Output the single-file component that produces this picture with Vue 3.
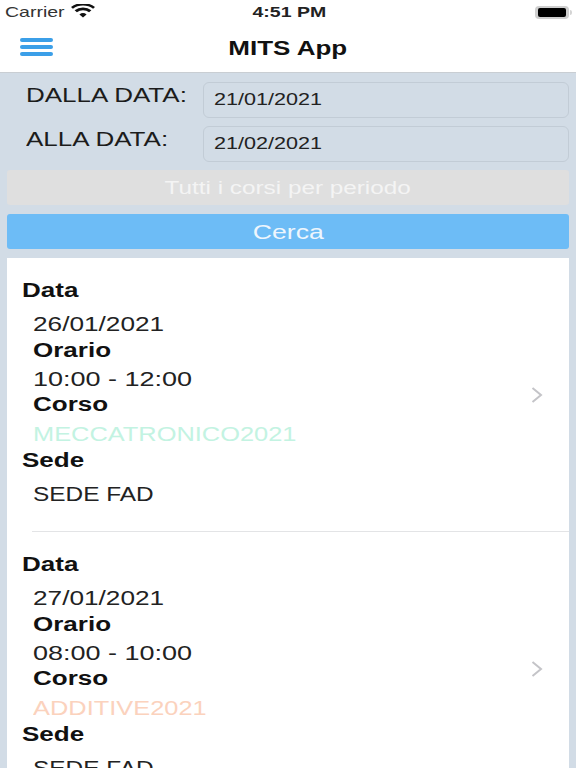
<template>
  <div class="screen">
    <div class="status">
      <div class="carrier">
        <span class="wide">Carrier</span>
        <svg class="wifi" viewBox="0 0 24 17" width="24" height="14" preserveAspectRatio="none">
          <path d="M12 16.5 8.4 12.6a5.2 5.2 0 0 1 7.2 0zM5.900 10.100 3.600 7.600a12.300 12.300 0 0 1 16.800 0l-2.300 2.500a9 9 0 0 0-12.200 0zM1.900 5.800 0 3.600a17.600 17.600 0 0 1 24 0l-1.900 2.200a14.800 14.800 0 0 0-20.200 0z" fill="#111" />
        </svg>
      </div>
      <span class="clock wide-c">4:51 PM</span>
      <div class="battery"><i /></div>
    </div>

    <header class="nav">
      <button class="burger" aria-label="Menu"><i /><i /><i /></button>
      <h1 class="wide-c">MITS App</h1>
    </header>

    <section class="filters">
      <div v-for="f in filters" :key="f.label" class="field">
        <label><span class="wide">{{ f.label }}</span></label>
        <div class="input"><span class="wide">{{ f.value }}</span></div>
      </div>
    </section>

    <button class="btn btn-grey"><span class="wide-c">Tutti i corsi per periodo</span></button>
    <button class="btn btn-blue"><span class="wide-c">Cerca</span></button>

    <main class="list">
      <article v-for="l in lessons" :key="l.date" class="lesson">
        <div class="info">
          <h3><span class="wide">Data</span></h3>
          <p class="date"><span class="wide">{{ l.date }}</span></p>
          <h4><span class="wide">Orario</span></h4>
          <p class="time"><span class="wide">{{ l.time }}</span></p>
          <h4><span class="wide">Corso</span></h4>
          <p class="course" :style="{ color: l.color }"><span class="wide">{{ l.course }}</span></p>
          <h3 class="sede"><span class="wide">Sede</span></h3>
          <p class="place"><span class="wide">{{ l.place }}</span></p>
        </div>
        <svg class="chevron" viewBox="0 0 12 18" width="12" height="18">
          <path d="M1.500 2 10 9l-8.500 7" fill="none" stroke="#c4c4c8" stroke-width="2" />
        </svg>
      </article>
    </main>
  </div>
</template>

<script setup>
const filters = [
  { label: 'DALLA DATA:', value: '21/01/2021' },
  { label: 'ALLA DATA:', value: '21/02/2021' },
]

const lessons = [
  { date: '26/01/2021', time: '10:00 - 12:00', course: 'MECCATRONICO2021', color: '#c3f3e2', place: 'SEDE FAD' },
  { date: '27/01/2021', time: '08:00 - 10:00', course: 'ADDITIVE2021', color: '#fbd2bd', place: 'SEDE FAD' },
]
</script>

<style>
html, body {
  margin: 0;
  background: #d2dce6;
}
</style>

<style scoped>
.screen {
  width: 576px;
  height: 768px;
  overflow: hidden;
  background: #d2dce6;
  font-family: "Liberation Sans", Arial, sans-serif;
  color: #111;
}

/* the whole shot is stretched sideways, so the text is too */
.wide, .wide-c {
  display: inline-block;
  transform: scaleX(1.3);
  white-space: nowrap;
}
.wide {
  transform-origin: left center;
}

.status {
  height: 22px;
  padding: 0 3px 2px 5px;
  background: #fff;
  display: grid;
  grid-template-columns: 1fr auto 1fr;
  align-items: center;
  font-size: 15px;
}
.carrier {
  display: flex;
  align-items: center;
  gap: 20px;
  color: #333;
}
.clock {
  font-weight: bold;
  color: #222;
}
.battery {
  justify-self: end;
  width: 28px;
  height: 9px;
  padding: 2px 3px;
  border-radius: 4px;
  background: #cfcfcf;
  margin-right: 4px;
  position: relative;
  top: 1px;
}
.battery::after {
  content: "";
  position: absolute;
  right: -3px;
  top: 4px;
  width: 2px;
  height: 5px;
  background: #d4d4d4;
  border-radius: 0 2px 2px 0;
}
.battery i {
  display: block;
  height: 100%;
  background: #000;
  border-radius: 2px;
}

.nav {
  height: 48px;
  background: #fff;
  border-bottom: 1px solid #c9ced3;
  display: flex;
  align-items: center;
  justify-content: center;
  position: relative;
}
.nav h1 {
  margin: 0;
  font-size: 20px;
  font-weight: bold;
}
.burger {
  position: absolute;
  left: 20px;
  top: 14px;
  width: 33px;
  padding: 0;
  border: 0;
  background: none;
  display: flex;
  flex-direction: column;
  gap: 3.500px;
}
.burger i {
  height: 3.500px;
  border-radius: 2px;
  background: #3b9fe8;
}

.filters {
  padding: 9px 7px 0 26px;
}
.field {
  display: flex;
  height: 36px;
  margin-bottom: 8px;
}
.field label {
  width: 159px;
  margin: 0 18px 0 0;
  font-size: 20px;
  line-height: 26px;
  flex-shrink: 0;
  color: #1c1c1c;
}
.input {
  flex: 1;
  box-sizing: border-box;
  height: 36px;
  padding-left: 10px;
  border: 1px solid #c2ccd6;
  border-radius: 6px;
  font-size: 17px;
  line-height: 34px;
  color: #222;
}
.input .wide {
  transform: scaleX(1.27);
}

.btn {
  display: block;
  box-sizing: border-box;
  width: 562px;
  height: 35px;
  margin: 0 7px 9px;
  padding: 0;
  border: 0;
  border-radius: 3px;
  color: #fff;
  font-family: inherit;
}
.btn-grey {
  margin-top: 1px;
  background: #dfdfdf;
  font-size: 18.700px;
  color: #f4f4f4;
}
.btn-blue {
  background: #6dbcf6;
  font-size: 20.500px;
  color: #eef6fd;
}

.list {
  margin: 0 7px;
  background: #fff;
}
.lesson {
  height: 273px;
  display: flex;
  align-items: center;
  padding-right: 26px;
  position: relative;
  border-bottom: 1px solid #e3e4e6;
}
.lesson:last-child {
  border-bottom: 0;
}
.lesson::after {
  content: "";
  position: absolute;
  left: 0;
  bottom: -1px;
  width: 25px;
  height: 1px;
  background: #fff;
}
.info {
  flex: 1;
  align-self: flex-start;
  padding: 20px 0 0 15px;
}
.info h3, .info h4, .info p {
  margin: 0;
  font-size: 20px;
  line-height: 24px;
}
.info h4, .info p {
  padding-left: 11px;
}
.info p {
  color: #222;
}
.info .date {
  margin-top: 10px;
}
.info .date .wide {
  transform: scaleX(1.31);
}
.info .date + h4 {
  margin-top: 2px;
}
.info .time {
  margin-top: 5px;
}
.info .time .wide {
  transform: scaleX(1.35);
}
.info .time + h4 {
  margin-top: 1px;
}
.info .course {
  margin-top: 6px;
}
.info .course .wide {
  transform: scaleX(1.27);
}
.info .sede {
  margin-top: 2px;
}
.info .place {
  margin-top: 10px;
}
.info .place .wide {
  transform: scaleX(1.22);
}
.chevron {
  flex-shrink: 0;
}
</style>
